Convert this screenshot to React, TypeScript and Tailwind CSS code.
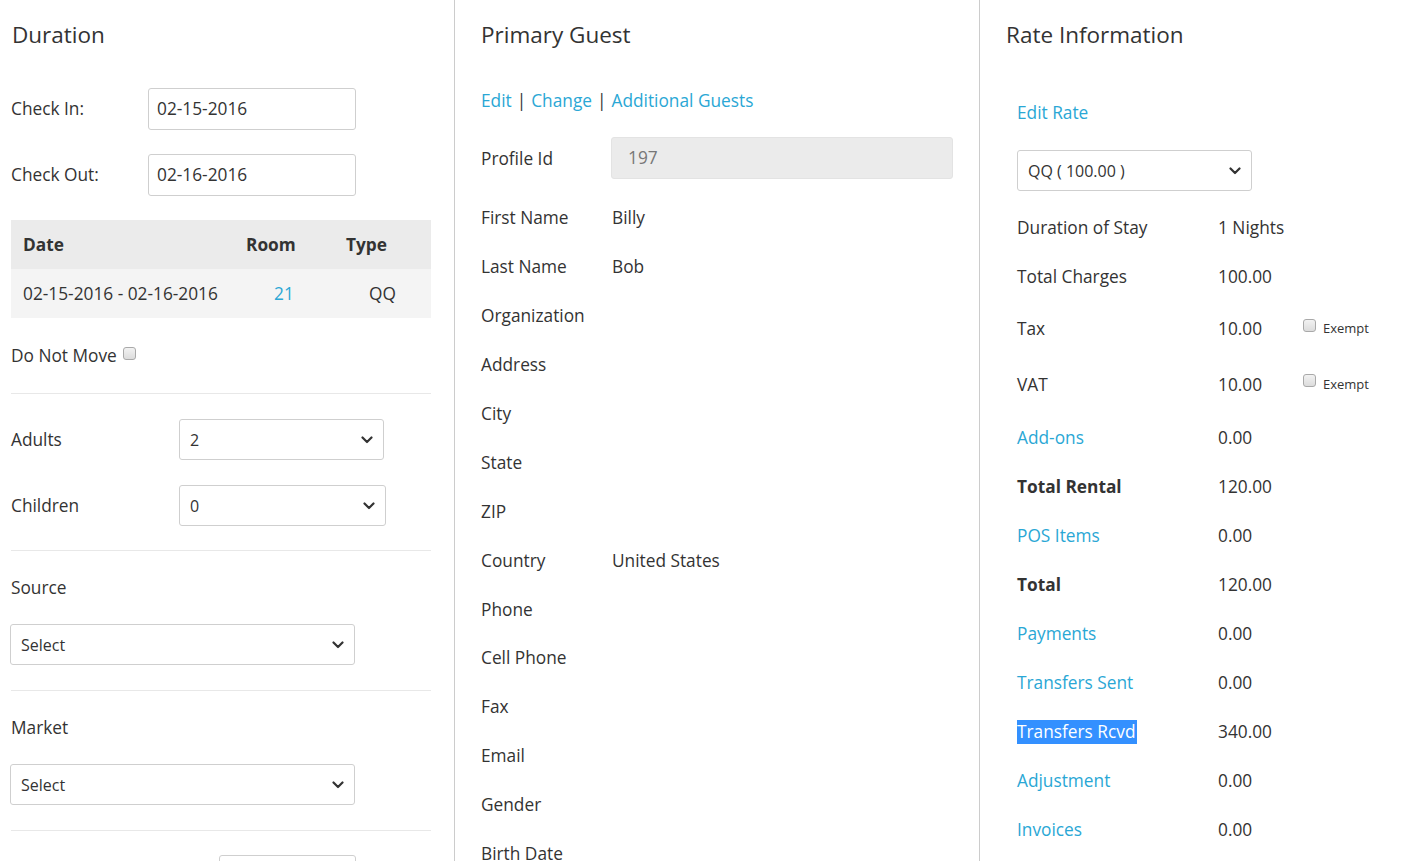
import React from "react";

const LINK = "text-[#2aa7d5]";

function Chevron() {
  return (
    <svg width="12" height="8" viewBox="0 0 12 8" className="shrink-0">
      <polyline points="1.5,1.5 6,6 10.5,1.5" fill="none" stroke="#333" strokeWidth="2.2" strokeLinecap="round" strokeLinejoin="round" />
    </svg>
  );
}

function Checkbox({ className = "" }: { className?: string }) {
  return (
    <span
      className={
        "inline-block w-[13px] h-[13px] rounded-[3px] border border-[#a9a9a9] bg-gradient-to-b from-[#f2f2f2] to-[#dcdcdc] shrink-0 " +
        className
      }
    />
  );
}

function SelectBox({ value, className }: { value: string; className: string }) {
  return (
    <div
      className={
        "h-[41px] border border-[#cfcfcf] rounded-[3px] flex items-center justify-between pl-[10px] pr-[10px] text-[16px] text-[#333] bg-white " +
        className
      }
    >
      <span>{value}</span>
      <Chevron />
    </div>
  );
}

function Hr() {
  return <div className="h-px bg-[#e8e8e8]" />;
}

function DurationColumn() {
  return (
    <div className="w-[455px] shrink-0 border-r border-[#cccccc] pl-[11px] pr-[23px]">
      <div className="h-[70px] flex items-center text-[22.5px] pl-px">Duration</div>
      <div className="mt-[18px] h-[42px] flex items-center">
        <span className="w-[137px]">Check In:</span>
        <div className="w-[208px] h-[42px] border border-[#cfcfcf] rounded-[3px] flex items-center pl-[8px]">02-15-2016</div>
      </div>
      <div className="mt-[24px] h-[42px] flex items-center">
        <span className="w-[137px]">Check Out:</span>
        <div className="w-[208px] h-[42px] border border-[#cfcfcf] rounded-[3px] flex items-center pl-[8px]">02-16-2016</div>
      </div>
      <div className="mt-[24px]">
        <div className="grid grid-cols-[223px_100px_97px] h-[49px] items-center bg-[#ebebeb] font-bold">
          <div className="pl-3">Date</div>
          <div className="pl-3">Room</div>
          <div className="pl-3">Type</div>
        </div>
        <div className="grid grid-cols-[223px_100px_97px] h-[49px] items-center bg-[#f4f4f4]">
          <div className="pl-3">02-15-2016 - 02-16-2016</div>
          <div className={"text-center " + LINK}>21</div>
          <div className="text-center">QQ</div>
        </div>
      </div>
      <div className="h-[75px] flex items-center pt-[1px]">
        <span>Do Not Move</span>
        <Checkbox className="ml-[6px] mb-[6px]" />
      </div>
      <Hr />
      <div className="mt-[25px] h-[41px] flex items-center">
        <span className="w-[168px]">Adults</span>
        <SelectBox value="2" className="w-[205px]" />
      </div>
      <div className="mt-[25px] h-[41px] flex items-center">
        <span className="w-[168px]">Children</span>
        <SelectBox value="0" className="w-[207px]" />
      </div>
      <div className="mt-[24px]"><Hr /></div>
      <div className="h-[73px] flex items-center">Source</div>
      <SelectBox value="Select" className="w-[345px] -ml-px" />
      <div className="mt-[25px]"><Hr /></div>
      <div className="h-[73px] flex items-center">Market</div>
      <SelectBox value="Select" className="w-[345px] -ml-px" />
      <div className="mt-[25px]"><Hr /></div>
      <div className="mt-[24px] flex">
        <div className="ml-[208px] w-[137px] h-[42px] border border-[#cfcfcf] rounded-[3px]" />
      </div>
    </div>
  );
}

const guestRows: [string, string][] = [
  ["First Name", "Billy"],
  ["Last Name", "Bob"],
  ["Organization", ""],
  ["Address", ""],
  ["City", ""],
  ["State", ""],
  ["ZIP", ""],
  ["Country", "United States"],
  ["Phone", ""],
  ["Cell Phone", ""],
  ["Fax", ""],
  ["Email", ""],
  ["Gender", ""],
  ["Birth Date", ""],
];

function GuestColumn() {
  return (
    <div className="w-[525px] shrink-0 border-r border-[#cccccc] pl-[26px] pr-[26px]">
      <div className="h-[70px] flex items-center text-[22.5px]">Primary Guest</div>
      <div className="h-[60px] flex items-center pt-[2px]">
        <span className={LINK}>Edit</span>
        <span className="mx-[5px]">|</span>
        <span className={LINK}>Change</span>
        <span className="mx-[5px]">|</span>
        <span className={LINK}>Additional Guests</span>
      </div>
      <div className="mt-[7px] h-[42px] flex items-center">
        <span className="w-[130px] pt-[1px]">Profile Id</span>
        <div className="w-[342px] h-[42px] rounded-[3px] bg-[#ebebeb] border border-[#e3e3e3] flex items-center pl-[16px] text-[#777]">197</div>
      </div>
      <div className="mt-[15px]">
        {guestRows.map(([l, v]) => (
          <div key={l} className="h-[48.9px] flex items-center">
            <span className="w-[131px]">{l}</span>
            <span>{v}</span>
          </div>
        ))}
      </div>
    </div>
  );
}

type RateRow = { label: string; value: string; kind: "plain" | "link" | "bold" | "sel"; h: string; exempt?: boolean };

const rateRows: RateRow[] = [
  { label: "Duration of Stay", value: "1 Nights", kind: "plain", h: "h-[49px]" },
  { label: "Total Charges", value: "100.00", kind: "plain", h: "h-[50px]" },
  { label: "Tax", value: "10.00", kind: "plain", h: "h-[54px]", exempt: true },
  { label: "VAT", value: "10.00", kind: "plain", h: "h-[57px]", exempt: true },
  { label: "Add-ons", value: "0.00", kind: "link", h: "h-[49px]" },
  { label: "Total Rental", value: "120.00", kind: "bold", h: "h-[49px]" },
  { label: "POS Items", value: "0.00", kind: "link", h: "h-[49px]" },
  { label: "Total", value: "120.00", kind: "bold", h: "h-[49px]" },
  { label: "Payments", value: "0.00", kind: "link", h: "h-[49px]" },
  { label: "Transfers Sent", value: "0.00", kind: "link", h: "h-[49px]" },
  { label: "Transfers Rcvd", value: "340.00", kind: "sel", h: "h-[49px]" },
  { label: "Adjustment", value: "0.00", kind: "link", h: "h-[49px]" },
  { label: "Invoices", value: "0.00", kind: "link", h: "h-[49px]" },
];

function RateColumn() {
  return (
    <div className="flex-1 pl-[26px]">
      <div className="h-[70px] flex items-center text-[22.5px]">Rate Information</div>
      <div className="pl-[11px]">
        <div className="h-[80px] flex items-center pt-[6px]">
          <span className={LINK}>Edit Rate</span>
        </div>
        <SelectBox value="QQ ( 100.00 )" className="w-[235px]" />
        <div className="mt-[12px]">
          {rateRows.map((r) => (
            <div key={r.label} className={"flex items-center " + r.h}>
              <span className="w-[201px]">
                {r.kind === "link" && <span className={LINK}>{r.label}</span>}
                {r.kind === "bold" && <span className="font-bold">{r.label}</span>}
                {r.kind === "plain" && <span>{r.label}</span>}
                {r.kind === "sel" && (
                  <span className="bg-[#3390ff] text-white leading-[24px] inline-block pr-[2px]">{r.label}</span>
                )}
              </span>
              <span className="w-[85px]">{r.value}</span>
              {r.exempt && (
                <>
                  <Checkbox className="mb-[8px]" />
                  <span className="ml-[7px] text-[13px]">Exempt</span>
                </>
              )}
            </div>
          ))}
        </div>
      </div>
    </div>
  );
}

export default function App() {
  return (
    <div className="h-[861px] w-[1424px] overflow-hidden bg-white flex font-['Open_Sans',sans-serif] text-[17.3px] text-[#333]">
      <DurationColumn />
      <GuestColumn />
      <RateColumn />
    </div>
  );
}
